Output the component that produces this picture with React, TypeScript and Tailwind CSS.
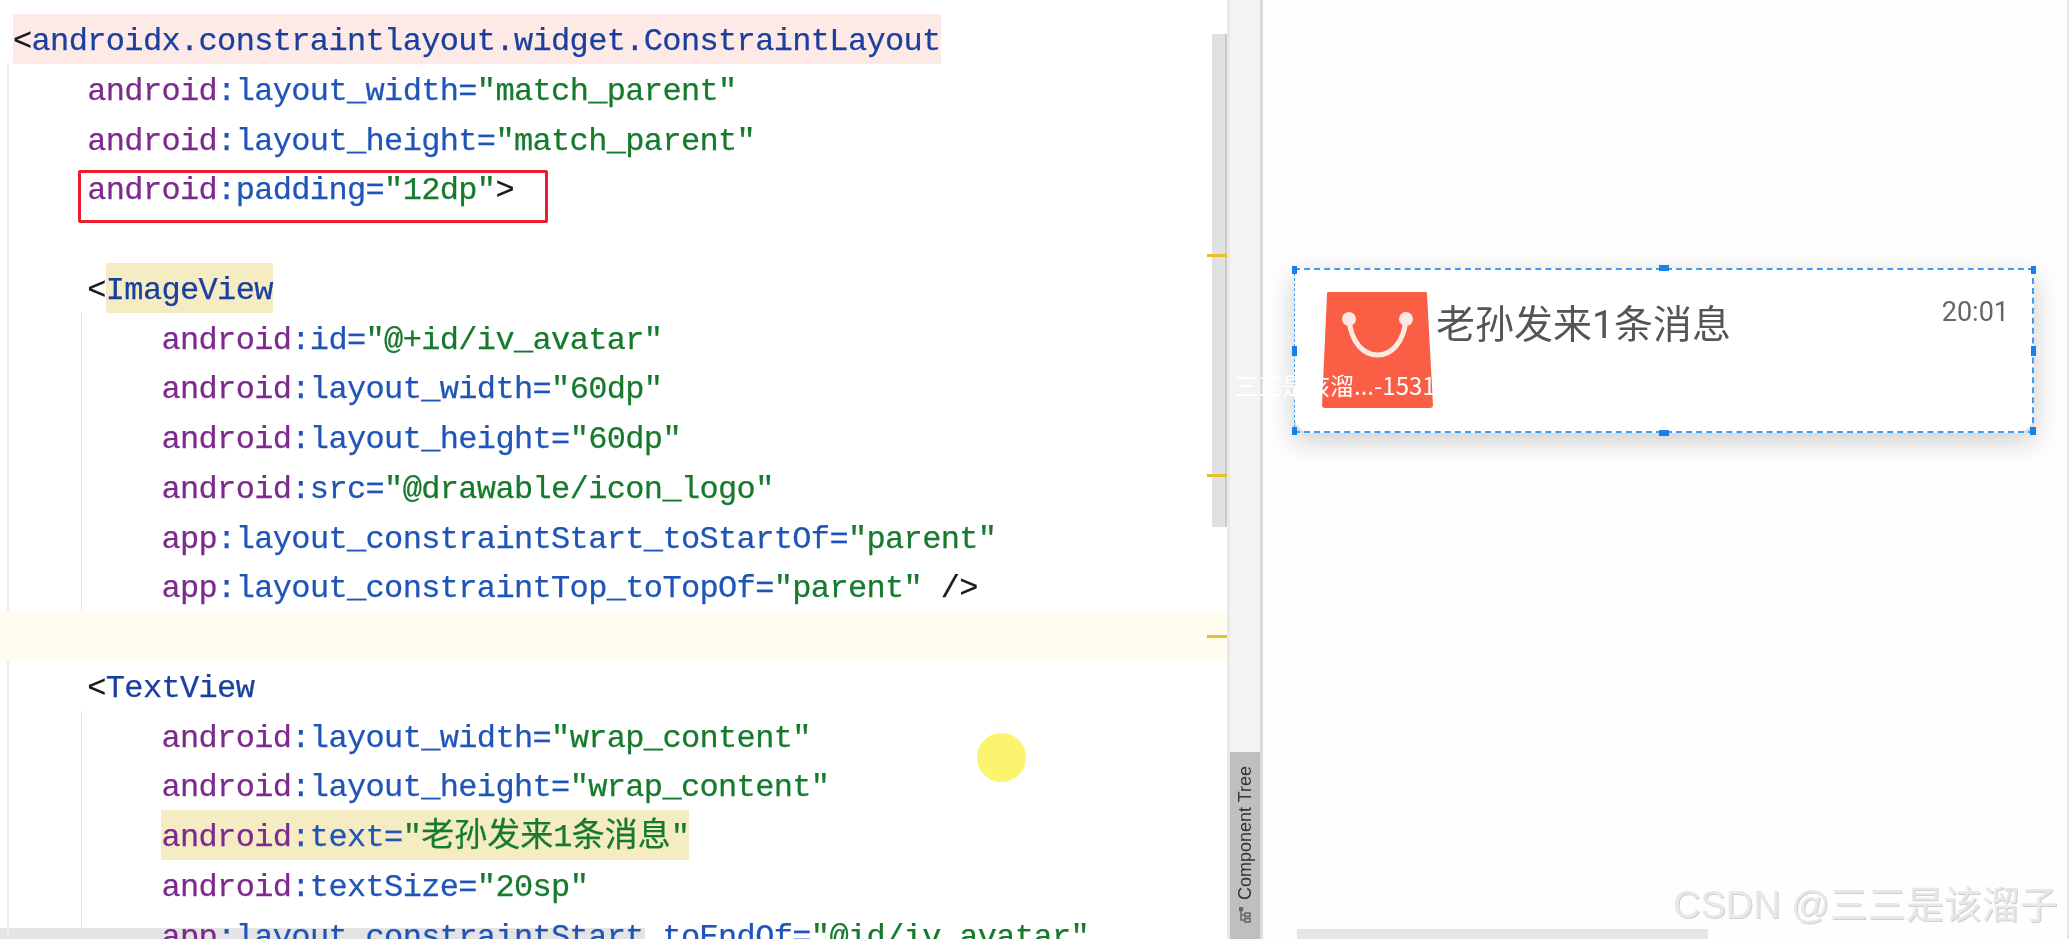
import React from 'react';

type Token = { t: string; c: string };

const NS = 'text-[#7d2a8e]';
const ATTR = 'text-[#1f55b8]';
const STR = 'text-[#157a2c]';
const TAG = 'text-[#1a3f9f]';
const PLAIN = 'text-[#1a1a1a]';

const attr = (ns: string, name: string, value: string, tail = ''): Token[] => {
    const out: Token[] = [
        { t: ns, c: NS },
        { t: ':' + name, c: ATTR },
        { t: '=', c: ATTR },
        { t: '"' + value + '"', c: STR },
    ];
    if (tail) out.push({ t: tail, c: PLAIN });
    return out;
};

type Row = { indent: number; tokens: Token[]; mark?: string; current?: boolean };

const tag = (name: string): Token[] => [{ t: '<', c: PLAIN }, { t: name, c: TAG }];

const rows: Row[] = [
    { indent: 0, tokens: tag('androidx.constraintlayout.widget.ConstraintLayout'), mark: 'bg-[#fdeae6]' },
    { indent: 4, tokens: attr('android', 'layout_width', 'match_parent') },
    { indent: 4, tokens: attr('android', 'layout_height', 'match_parent') },
    { indent: 4, tokens: attr('android', 'padding', '12dp', '>') },
    { indent: 0, tokens: [] },
    { indent: 4, tokens: tag('ImageView'), mark: 'bg-[#f6ecc4]' },
    { indent: 8, tokens: attr('android', 'id', '@+id/iv_avatar') },
    { indent: 8, tokens: attr('android', 'layout_width', '60dp') },
    { indent: 8, tokens: attr('android', 'layout_height', '60dp') },
    { indent: 8, tokens: attr('android', 'src', '@drawable/icon_logo') },
    { indent: 8, tokens: attr('app', 'layout_constraintStart_toStartOf', 'parent') },
    { indent: 8, tokens: attr('app', 'layout_constraintTop_toTopOf', 'parent', ' />') },
    { indent: 0, tokens: [], current: true },
    { indent: 4, tokens: tag('TextView') },
    { indent: 8, tokens: attr('android', 'layout_width', 'wrap_content') },
    { indent: 8, tokens: attr('android', 'layout_height', 'wrap_content') },
    { indent: 8, tokens: attr('android', 'text', '老孙发来1条消息'), mark: 'bg-[#f6ecc4]' },
    { indent: 8, tokens: attr('android', 'textSize', '20sp') },
    { indent: 8, tokens: attr('app', 'layout_constraintStart_toEndOf', '@id/iv_avatar') },
];

const CodeText: React.FC<{ text: string }> = ({ text }) => {
    // CJK chars in the editor are narrower than two columns
    const parts = text.split(/([\u4e00-\u9fff]+)/);
    return (
        <>
            {parts.map((p, i) =>
                /[\u4e00-\u9fff]/.test(p) ? (
                    <span key={i} className="tracking-normal text-[33px] leading-[0] font-['Noto_Sans_CJK_SC',sans-serif]">{p}</span>
                ) : (
                    <span key={i}>{p}</span>
                )
            )}
        </>
    );
};

const CodeLine: React.FC<{ row: Row }> = ({ row }) => (
    <div className={`h-[49.75px] leading-[55px] whitespace-pre pl-[13px] ${row.current ? 'bg-[#fefdf0]' : ''}`}>
        <span>{' '.repeat(row.indent)}</span>
        <span className={`inline-block align-top h-[49.75px] ${row.mark || ''}`}>
            {row.tokens.map((tok, i) => {
                // the ImageView highlight only covers the name, not the bracket
                if (row.tokens.length === 2 && row.mark && tok.t === '<' && row.indent > 0) {
                    return <span key={i} className={`${tok.c} inline-block h-[49.75px] bg-white`}>{tok.t}</span>;
                }
                return (
                    <span key={i} className={tok.c}>
                        <CodeText text={tok.t} />
                    </span>
                );
            })}
        </span>
    </div>
);

const Handle: React.FC<{ className: string }> = ({ className }) => (
    <span className={`absolute bg-[#1b7fe8] ${className}`} />
);

const BagLogo: React.FC = () => (
    <svg viewBox="0 0 111 116" className="w-[111px] h-[116px] shrink-0">
        <path d="M6 0 L104 0 Q105 0 105 2 L111 113 Q111 116 108 116 L3 116 Q0 116 0 113 L5 2 Q5 0 6 0 Z" fill="#fa5f45" />
        <path d="M27 27 C29 51 42 63 55.5 63 C69 63 82 51 84 27" fill="none" stroke="#fde9e2" strokeWidth="5" />
        <circle cx="27" cy="27" r="7" fill="#fde9e2" />
        <circle cx="84" cy="27" r="7" fill="#fde9e2" />
    </svg>
);

const TreeIcon: React.FC = () => (
    <svg viewBox="0 0 12 16" className="w-3 h-4" fill="none" stroke="#666" strokeWidth="1.5">
        <rect x="0.8" y="0.8" width="2.6" height="2.6" fill="#666" />
        <path d="M2 3v10h4M2 8h4" />
        <rect x="6" y="6" width="5" height="3.5" />
        <rect x="6" y="11.5" width="5" height="3.5" />
    </svg>
);

const App: React.FC = () => {
    return (
        <div className="w-[2069px] h-[939px] overflow-hidden">
            <div className="relative flex w-full h-full bg-white blur-[0.5px] font-['Liberation_Sans',sans-serif]">
                {/* editor */}
                <div className="relative w-[1227px] shrink-0 h-full overflow-hidden bg-white font-['Liberation_Mono','Noto_Sans_CJK_SC',monospace] text-[32px] tracking-[-0.65px] [-webkit-text-stroke:0.25px]">
                    <div className="absolute left-0 bottom-0 w-[645px] h-[11px] bg-[#e4e4e4]" />
                    <div className="absolute left-[7px] top-[63px] bottom-0 w-[2px] bg-[#ededed]" />
                    <div className="absolute left-[81px] top-[312px] h-[300px] w-[1px] bg-[#e4e4e4]" />
                    <div className="absolute left-[81px] top-[711px] bottom-0 w-[1px] bg-[#e4e4e4]" />

                    <div className="relative pt-[14px]">
                        {rows.map((r, i) => (
                            <CodeLine key={i} row={r} />
                        ))}
                    </div>

                    {/* red annotation box */}
                    <div className="absolute left-[78px] top-[170px] w-[470px] h-[53px] border-[3px] border-[#ee1c2e] rounded-[2px]" />

                    {/* scrollbar + markers */}
                    <div className="absolute left-[1212px] top-[34px] w-[15px] h-[493px] bg-[#e0e0e0] border-r-2 border-[#cacaca]" />
                    <div className="absolute left-[1207px] top-[254px] w-[20px] h-[3px] bg-[#e6c02e]" />
                    <div className="absolute left-[1207px] top-[474px] w-[20px] h-[3px] bg-[#e6c02e]" />
                    <div className="absolute left-[1207px] top-[635px] w-[20px] h-[3px] bg-[#e6c02e]" />

                    {/* mouse highlight */}
                    <div className="absolute left-[977px] top-[733px] w-[49px] h-[49px] rounded-full bg-[#fbf46e]" />
                </div>

                {/* side strip */}
                <div className="w-[36px] shrink-0 h-full flex flex-col bg-[#f3f3f3] border-l-[3px] border-r-[3px] border-l-[#e9e9e9] border-r-[#dcdcdc]">
                    <div className="flex-1" />
                    <div className="h-[187px] bg-[#bfbfbf] flex flex-col items-center justify-end pb-[16px] gap-[7px]">
                        <span className="[writing-mode:vertical-rl] rotate-180 text-[18px] leading-none text-[#333333]">Component Tree</span>
                        <TreeIcon />
                    </div>
                </div>

                {/* design preview */}
                <div className="flex-1 h-full flex flex-col bg-[#fefefe] pl-[31px] pt-[268px] border-r-2 border-[#e6e6e6]">
                    <div className="relative w-[740px] h-[165px] bg-[#dddddd] shadow-[0_8px_26px_rgba(0,0,0,0.2)]">
                        <div className="h-full flex items-start rounded-b-[18px] bg-white pl-[28px] pt-[24px] pr-[25px]">
                            <BagLogo />
                            <span className="ml-[3px] mt-[10px] text-[39px] leading-[46px] text-[#555555] font-['Roboto','Noto_Sans_CJK_SC',sans-serif]">老孙发来1条消息</span>
                            <span className="ml-auto mt-[3px] text-[27px] leading-[34px] text-[#666666] font-['Roboto',sans-serif]">20:01</span>
                        </div>
                        <div className="absolute inset-0 border-2 border-l border-dashed border-[#3f9cf0]" />
                        <Handle className="left-[-2px] top-[-2px] w-[5px] h-[8px]" />
                        <Handle className="right-[-2px] top-[-2px] w-[5px] h-[8px]" />
                        <Handle className="left-[-2px] bottom-[-2px] w-[5px] h-[8px]" />
                        <Handle className="right-[-2px] bottom-[-2px] w-[6px] h-[8px]" />
                        <Handle className="left-[365px] top-[-3px] w-[10px] h-[6px]" />
                        <Handle className="left-[365px] bottom-[-3px] w-[10px] h-[6px]" />
                        <Handle className="left-[-2px] top-[78px] w-[5px] h-[10px]" />
                        <Handle className="right-[-2px] top-[78px] w-[5px] h-[10px]" />
                    </div>
                    <div className="mt-auto ml-[3px] w-[411px] h-[10px] bg-[#e6e6e6]" />
                </div>

                {/* video overlay text + watermark */}
                <span className="absolute left-[1234px] top-[370px] text-[24px] leading-[30px] text-white whitespace-nowrap font-['Noto_Sans_CJK_SC',sans-serif]">三三是该溜...-1531</span>
                <span className="absolute left-[1673px] top-[877px] text-[38px] leading-[56px] text-[#e8e8e8] whitespace-nowrap [text-shadow:1px_1px_0_#cfcfcf] font-['Liberation_Sans','Noto_Sans_CJK_SC',sans-serif]">CSDN @三三是该溜子</span>
            </div>
        </div>
    );
};

export default App;
